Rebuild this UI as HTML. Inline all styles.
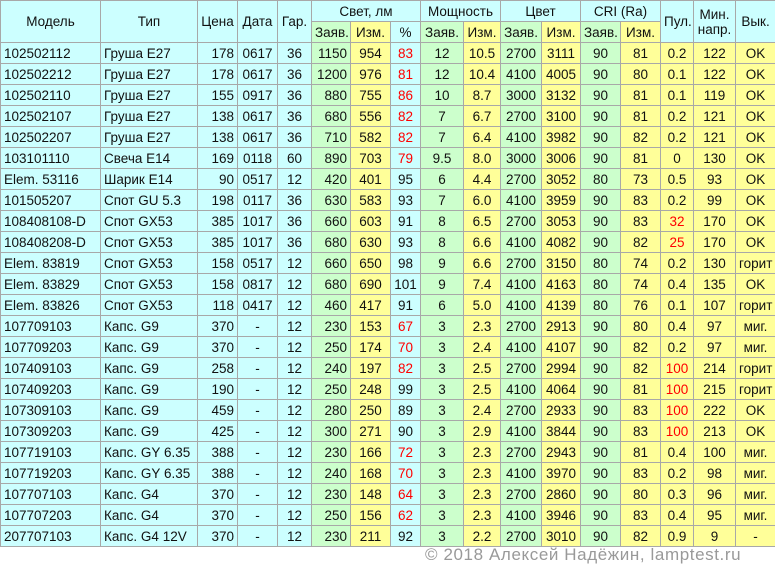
<!DOCTYPE html>
<html><head><meta charset="utf-8"><style>
body{margin:0;width:775px;height:570px;background:#fff;overflow:hidden;font-family:"Liberation Sans",sans-serif;}
table{border-collapse:collapse;table-layout:fixed;position:absolute;left:0;top:0;width:775px;font-size:13.5px;color:#111;}
td{border:1px solid #a8a8a8;height:20px;padding:0 3px;text-align:center;white-space:nowrap;overflow:hidden;background:#ccffff;}
td.l{text-align:left}td.r{text-align:right}
.g{background:#ccffcc}.y{background:#ffff99}
.red{color:#f00}
.h td{height:20px}
.foot{position:absolute;left:425px;top:545px;font-size:17px;color:#999;letter-spacing:.6px;white-space:nowrap}
</style></head><body>
<table>
<colgroup><col style="width:100px"><col style="width:97px"><col style="width:40px"><col style="width:40px"><col style="width:34px"><col style="width:39px"><col style="width:40px"><col style="width:30px"><col style="width:43px"><col style="width:37px"><col style="width:41px"><col style="width:39px"><col style="width:40px"><col style="width:40px"><col style="width:33px"><col style="width:42px"><col style="width:40px"></colgroup>
<tr class="h"><td rowspan="2">Модель</td><td rowspan="2">Тип</td><td rowspan="2">Цена</td><td rowspan="2">Дата</td><td rowspan="2">Гар.</td><td colspan="3">Свет, лм</td><td colspan="2">Мощность</td><td colspan="2">Цвет</td><td colspan="2">CRI (Ra)</td><td rowspan="2">Пул.</td><td rowspan="2">Мин.<br>напр.</td><td rowspan="2">Вык.</td></tr>
<tr class="h"><td class="g">Заяв.</td><td class="y">Изм.</td><td>%</td><td class="g">Заяв.</td><td class="y">Изм.</td><td class="g">Заяв.</td><td class="y">Изм.</td><td class="g">Заяв.</td><td class="y">Изм.</td></tr>
<tr><td class="l">102502112</td><td class="l">Груша E27</td><td class="r">178</td><td>0617</td><td>36</td><td class="g r">1150</td><td class="y">954</td><td class="red">83</td><td class="g">12</td><td class="y">10.5</td><td class="g">2700</td><td class="y">3111</td><td class="g">90</td><td class="y">81</td><td class="y">0.2</td><td class="y">122</td><td class="y">OK</td></tr>
<tr><td class="l">102502212</td><td class="l">Груша E27</td><td class="r">178</td><td>0617</td><td>36</td><td class="g r">1200</td><td class="y">976</td><td class="red">81</td><td class="g">12</td><td class="y">10.4</td><td class="g">4100</td><td class="y">4005</td><td class="g">90</td><td class="y">80</td><td class="y">0.1</td><td class="y">122</td><td class="y">OK</td></tr>
<tr><td class="l">102502110</td><td class="l">Груша E27</td><td class="r">155</td><td>0917</td><td>36</td><td class="g r">880</td><td class="y">755</td><td class="red">86</td><td class="g">10</td><td class="y">8.7</td><td class="g">3000</td><td class="y">3132</td><td class="g">90</td><td class="y">81</td><td class="y">0.1</td><td class="y">119</td><td class="y">OK</td></tr>
<tr><td class="l">102502107</td><td class="l">Груша E27</td><td class="r">138</td><td>0617</td><td>36</td><td class="g r">680</td><td class="y">556</td><td class="red">82</td><td class="g">7</td><td class="y">6.7</td><td class="g">2700</td><td class="y">3100</td><td class="g">90</td><td class="y">81</td><td class="y">0.2</td><td class="y">121</td><td class="y">OK</td></tr>
<tr><td class="l">102502207</td><td class="l">Груша E27</td><td class="r">138</td><td>0617</td><td>36</td><td class="g r">710</td><td class="y">582</td><td class="red">82</td><td class="g">7</td><td class="y">6.4</td><td class="g">4100</td><td class="y">3982</td><td class="g">90</td><td class="y">82</td><td class="y">0.2</td><td class="y">121</td><td class="y">OK</td></tr>
<tr><td class="l">103101110</td><td class="l">Свеча E14</td><td class="r">169</td><td>0118</td><td>60</td><td class="g r">890</td><td class="y">703</td><td class="red">79</td><td class="g">9.5</td><td class="y">8.0</td><td class="g">3000</td><td class="y">3006</td><td class="g">90</td><td class="y">81</td><td class="y">0</td><td class="y">130</td><td class="y">OK</td></tr>
<tr><td class="l">Elem. 53116</td><td class="l">Шарик E14</td><td class="r">90</td><td>0517</td><td>12</td><td class="g r">420</td><td class="y">401</td><td>95</td><td class="g">6</td><td class="y">4.4</td><td class="g">2700</td><td class="y">3052</td><td class="g">80</td><td class="y">73</td><td class="y">0.5</td><td class="y">93</td><td class="y">OK</td></tr>
<tr><td class="l">101505207</td><td class="l">Спот GU 5.3</td><td class="r">198</td><td>0117</td><td>36</td><td class="g r">630</td><td class="y">583</td><td>93</td><td class="g">7</td><td class="y">6.0</td><td class="g">4100</td><td class="y">3959</td><td class="g">90</td><td class="y">83</td><td class="y">0.2</td><td class="y">99</td><td class="y">OK</td></tr>
<tr><td class="l">108408108-D</td><td class="l">Спот GX53</td><td class="r">385</td><td>1017</td><td>36</td><td class="g r">660</td><td class="y">603</td><td>91</td><td class="g">8</td><td class="y">6.5</td><td class="g">2700</td><td class="y">3053</td><td class="g">90</td><td class="y">83</td><td class="y red">32</td><td class="y">170</td><td class="y">OK</td></tr>
<tr><td class="l">108408208-D</td><td class="l">Спот GX53</td><td class="r">385</td><td>1017</td><td>36</td><td class="g r">680</td><td class="y">630</td><td>93</td><td class="g">8</td><td class="y">6.6</td><td class="g">4100</td><td class="y">4082</td><td class="g">90</td><td class="y">82</td><td class="y red">25</td><td class="y">170</td><td class="y">OK</td></tr>
<tr><td class="l">Elem. 83819</td><td class="l">Спот GX53</td><td class="r">158</td><td>0517</td><td>12</td><td class="g r">660</td><td class="y">650</td><td>98</td><td class="g">9</td><td class="y">6.6</td><td class="g">2700</td><td class="y">3150</td><td class="g">80</td><td class="y">74</td><td class="y">0.2</td><td class="y">130</td><td class="y">горит</td></tr>
<tr><td class="l">Elem. 83829</td><td class="l">Спот GX53</td><td class="r">158</td><td>0817</td><td>12</td><td class="g r">680</td><td class="y">690</td><td>101</td><td class="g">9</td><td class="y">7.4</td><td class="g">4100</td><td class="y">4163</td><td class="g">80</td><td class="y">74</td><td class="y">0.4</td><td class="y">135</td><td class="y">OK</td></tr>
<tr><td class="l">Elem. 83826</td><td class="l">Спот GX53</td><td class="r">118</td><td>0417</td><td>12</td><td class="g r">460</td><td class="y">417</td><td>91</td><td class="g">6</td><td class="y">5.0</td><td class="g">4100</td><td class="y">4139</td><td class="g">80</td><td class="y">76</td><td class="y">0.1</td><td class="y">107</td><td class="y">горит</td></tr>
<tr><td class="l">107709103</td><td class="l">Капс. G9</td><td class="r">370</td><td>-</td><td>12</td><td class="g r">230</td><td class="y">153</td><td class="red">67</td><td class="g">3</td><td class="y">2.3</td><td class="g">2700</td><td class="y">2913</td><td class="g">90</td><td class="y">80</td><td class="y">0.4</td><td class="y">97</td><td class="y">миг.</td></tr>
<tr><td class="l">107709203</td><td class="l">Капс. G9</td><td class="r">370</td><td>-</td><td>12</td><td class="g r">250</td><td class="y">174</td><td class="red">70</td><td class="g">3</td><td class="y">2.4</td><td class="g">4100</td><td class="y">4107</td><td class="g">90</td><td class="y">82</td><td class="y">0.2</td><td class="y">97</td><td class="y">миг.</td></tr>
<tr><td class="l">107409103</td><td class="l">Капс. G9</td><td class="r">258</td><td>-</td><td>12</td><td class="g r">240</td><td class="y">197</td><td class="red">82</td><td class="g">3</td><td class="y">2.5</td><td class="g">2700</td><td class="y">2994</td><td class="g">90</td><td class="y">82</td><td class="y red">100</td><td class="y">214</td><td class="y">горит</td></tr>
<tr><td class="l">107409203</td><td class="l">Капс. G9</td><td class="r">190</td><td>-</td><td>12</td><td class="g r">250</td><td class="y">248</td><td>99</td><td class="g">3</td><td class="y">2.5</td><td class="g">4100</td><td class="y">4064</td><td class="g">90</td><td class="y">81</td><td class="y red">100</td><td class="y">215</td><td class="y">горит</td></tr>
<tr><td class="l">107309103</td><td class="l">Капс. G9</td><td class="r">459</td><td>-</td><td>12</td><td class="g r">280</td><td class="y">250</td><td>89</td><td class="g">3</td><td class="y">2.4</td><td class="g">2700</td><td class="y">2933</td><td class="g">90</td><td class="y">83</td><td class="y red">100</td><td class="y">222</td><td class="y">OK</td></tr>
<tr><td class="l">107309203</td><td class="l">Капс. G9</td><td class="r">425</td><td>-</td><td>12</td><td class="g r">300</td><td class="y">271</td><td>90</td><td class="g">3</td><td class="y">2.9</td><td class="g">4100</td><td class="y">3844</td><td class="g">90</td><td class="y">83</td><td class="y red">100</td><td class="y">213</td><td class="y">OK</td></tr>
<tr><td class="l">107719103</td><td class="l">Капс. GY 6.35</td><td class="r">388</td><td>-</td><td>12</td><td class="g r">230</td><td class="y">166</td><td class="red">72</td><td class="g">3</td><td class="y">2.3</td><td class="g">2700</td><td class="y">2943</td><td class="g">90</td><td class="y">81</td><td class="y">0.4</td><td class="y">100</td><td class="y">миг.</td></tr>
<tr><td class="l">107719203</td><td class="l">Капс. GY 6.35</td><td class="r">388</td><td>-</td><td>12</td><td class="g r">240</td><td class="y">168</td><td class="red">70</td><td class="g">3</td><td class="y">2.3</td><td class="g">4100</td><td class="y">3970</td><td class="g">90</td><td class="y">83</td><td class="y">0.2</td><td class="y">98</td><td class="y">миг.</td></tr>
<tr><td class="l">107707103</td><td class="l">Капс. G4</td><td class="r">370</td><td>-</td><td>12</td><td class="g r">230</td><td class="y">148</td><td class="red">64</td><td class="g">3</td><td class="y">2.3</td><td class="g">2700</td><td class="y">2860</td><td class="g">90</td><td class="y">80</td><td class="y">0.3</td><td class="y">96</td><td class="y">миг.</td></tr>
<tr><td class="l">107707203</td><td class="l">Капс. G4</td><td class="r">370</td><td>-</td><td>12</td><td class="g r">250</td><td class="y">156</td><td class="red">62</td><td class="g">3</td><td class="y">2.3</td><td class="g">4100</td><td class="y">3946</td><td class="g">90</td><td class="y">83</td><td class="y">0.4</td><td class="y">95</td><td class="y">миг.</td></tr>
<tr><td class="l">207707103</td><td class="l">Капс. G4 12V</td><td class="r">370</td><td>-</td><td>12</td><td class="g r">230</td><td class="y">211</td><td>92</td><td class="g">3</td><td class="y">2.2</td><td class="g">2700</td><td class="y">3010</td><td class="g">90</td><td class="y">82</td><td class="y">0.9</td><td class="y">9</td><td class="y">-</td></tr>
</table>
<div class="foot">© 2018 Алексей Надёжин, lamptest.ru</div>
</body></html>
